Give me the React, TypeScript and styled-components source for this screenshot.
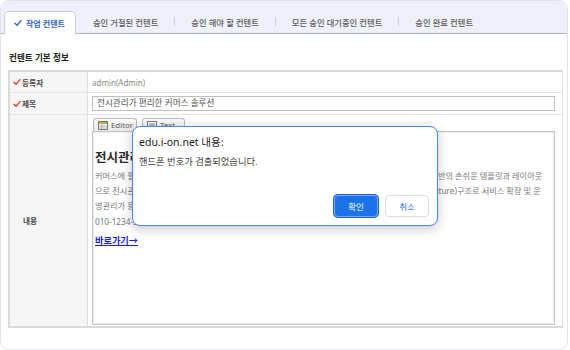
import React from "react";
import styled, { createGlobalStyle } from "styled-components";

const GlobalStyle = createGlobalStyle`
  html, body {
    margin: 0;
    padding: 0;
    background: #fff;
  }
  body {
    font-family: "Noto Sans", "Noto Sans CJK KR", sans-serif;
    color: #333;
  }
`;

const Card = styled.div`
  position: relative;
  box-sizing: border-box;
  width: 568px;
  height: 350px;
  border: 1px solid #e1e3e8;
  border-radius: 9px;
  overflow: hidden;
  background: #fff;
`;

const TabBar = styled.nav`
  display: flex;
  align-items: flex-end;
  height: 32px;
  padding-left: 3px;
  background: #eef1f9;
  border-bottom: 1px solid #aab6d8;
`;

const Tab = styled.div<{ $active?: boolean }>`
  display: flex;
  align-items: center;
  gap: 4px;
  box-sizing: border-box;
  height: ${({ $active }) => ($active ? "23px" : "22px")};
  margin-bottom: ${({ $active }) => ($active ? "-1px" : "0")};
  padding: ${({ $active }) => ($active ? "0 10px 0 9px" : "0 16px")};
  background: ${({ $active }) => ($active ? "#fff" : "transparent")};
  border: ${({ $active }) => ($active ? "1px solid #c6cee4" : "none")};
  border-bottom: none;
  border-radius: 5px 5px 0 0;
  font-size: ${({ $active }) => ($active ? "8px" : "8.3px")};
  font-weight: ${({ $active }) => ($active ? 700 : 500)};
  color: ${({ $active }) => ($active ? "#2d66cc" : "#5c5c5c")};
  white-space: nowrap;
  &:nth-child(2) {
    margin-left: 1px;
  }
`;

const Divider = styled.span`
  align-self: center;
  width: 1px;
  height: 9px;
  margin-top: 8px;
  background: #c9ccd4;
`;

const Body = styled.div`
  padding: 18px 4px 0 7px;
`;

const SectionTitle = styled.h3`
  margin: 0 0 6px 1px;
  font-size: 8.6px;
  line-height: 12px;
  font-weight: 700;
  color: #222;
`;

const InfoTable = styled.div`
  display: grid;
  grid-template-columns: 78px 1fr;
  grid-template-rows: 21px 22px 211px;
  border: 2px solid #dadada;
  border-right-width: 1px;
`;

const LabelCell = styled.div<{ $indent?: number; $last?: boolean }>`
  display: flex;
  align-items: center;
  gap: 1px;
  box-sizing: border-box;
  padding-left: ${({ $indent }) => $indent ?? 3}px;
  background: #f6f6f6;
  border-right: 1px solid #dedede;
  border-bottom: ${({ $last }) => ($last ? "none" : "1px solid #e4e4e4")};
  font-size: 7.7px;
  font-weight: 700;
  color: #4a4a4a;
`;

const ValueCell = styled.div<{ $last?: boolean }>`
  display: flex;
  align-items: center;
  box-sizing: border-box;
  padding: 0 7px 0 4px;
  border-bottom: ${({ $last }) => ($last ? "none" : "1px solid #e4e4e4")};
  font-size: 8px;
  color: #8a8a8a;
`;

const EditorCell = styled(ValueCell)`
  flex-direction: column;
  align-items: stretch;
  padding: 3px 7px 1px 4px;
`;

const TitleInput = styled.div`
  box-sizing: border-box;
  width: 100%;
  height: 15px;
  padding-left: 4px;
  border: 1px solid #bfbfbf;
  font-size: 8.6px;
  line-height: 13px;
  color: #555;
`;

const EditorTabs = styled.div`
  display: flex;
  gap: 5px;
  padding-left: 1px;
`;

const EditorTab = styled.div<{ $width: number }>`
  display: flex;
  align-items: center;
  gap: 3px;
  box-sizing: border-box;
  width: ${({ $width }) => $width}px;
  height: 13px;
  padding-left: 4px;
  border: 1px solid #b9b9b9;
  border-bottom: none;
  border-radius: 3px 3px 0 0;
  background: linear-gradient(#fbfbfb, #e9e9e9);
  font-size: 7.8px;
  color: #555;
`;

const EditorBox = styled.div`
  flex: 1;
  padding: 17px 6px 0 2px;
  border: 1px solid #c4c4c4;
  box-shadow: inset 0 0 0 1px #efefef;
  overflow: hidden;
`;

const Heading = styled.h2`
  margin: 0 0 1px;
  font-size: 12.5px;
  line-height: 18px;
  font-weight: 700;
  color: #2a2a2a;
  white-space: nowrap;
`;

const Para = styled.p`
  margin: 0;
  font-size: 8.2px;
  line-height: 15.2px;
  color: #7a7a7a;
  white-space: nowrap;
`;

const ShortcutLink = styled.a`
  display: inline-block;
  margin-top: 5px;
  font-size: 9.2px;
  line-height: 14px;
  font-weight: 700;
  color: #1c1ce8;
  text-decoration: underline;
`;

const Dialog = styled.div`
  position: absolute;
  left: 131px;
  top: 125px;
  display: flex;
  flex-direction: column;
  box-sizing: border-box;
  width: 306px;
  height: 100px;
  padding: 7px 8px 8px 6px;
  background: #fff;
  border: 1.5px solid #4a86f5;
  border-radius: 8px;
  box-shadow: 0 3px 12px rgba(0, 0, 0, 0.22);
`;

const DialogTitle = styled.div`
  font-size: 10.5px;
  line-height: 16px;
  color: #202124;
`;

const DialogMsg = styled.div`
  margin-top: 5px;
  font-size: 9.3px;
  line-height: 14px;
  color: #3c3c3c;
`;

const DialogActions = styled.div`
  display: flex;
  justify-content: flex-end;
  gap: 7px;
  margin-top: auto;
`;

const DialogButton = styled.button<{ $primary?: boolean }>`
  box-sizing: border-box;
  width: 44px;
  height: 22px;
  padding: 0;
  border-radius: 4px;
  border: 1px solid ${({ $primary }) => ($primary ? "#7eaaf2" : "#dadce0")};
  box-shadow: ${({ $primary }) => ($primary ? "0 0 0 1px #1b5fcf" : "none")};
  background: ${({ $primary }) => ($primary ? "#1a73e8" : "#fff")};
  color: ${({ $primary }) => ($primary ? "#fff" : "#1a73e8")};
  font-family: "Noto Sans", "Noto Sans CJK KR", sans-serif;
  font-size: 8.5px;
`;

const Check = ({ color, size = 8 }: { color: string; size?: number }) => (
  <svg width={size} height={size} viewBox="0 0 10 10">
    <polyline
      points="1.2,5.2 3.8,7.8 8.8,2"
      fill="none"
      stroke={color}
      strokeWidth="1.8"
      strokeLinecap="round"
      strokeLinejoin="round"
    />
  </svg>
);

const EditorIcon = () => (
  <svg width="10" height="9" viewBox="0 0 10 9">
    <rect x="0.5" y="0.5" width="9" height="8" fill="#fff" stroke="#7a7a7a" />
    <rect x="1" y="1" width="4" height="2" fill="#f0a33a" />
    <rect x="5" y="1" width="4" height="2" fill="#7cbf5a" />
    <line x1="1" y1="5" x2="9" y2="5" stroke="#b5b5b5" />
    <line x1="1" y1="7" x2="9" y2="7" stroke="#b5b5b5" />
    <line x1="4" y1="3" x2="4" y2="8" stroke="#b5b5b5" />
  </svg>
);

const TextIcon = () => (
  <svg width="10" height="9" viewBox="0 0 10 9">
    <rect x="0.5" y="0.5" width="9" height="8" fill="#fff" stroke="#7a7a7a" />
    <line x1="2" y1="3" x2="8" y2="3" stroke="#777" />
    <line x1="2" y1="5" x2="8" y2="5" stroke="#777" />
    <line x1="2" y1="7" x2="6" y2="7" stroke="#777" />
  </svg>
);

const tabs = [
  "승인 거절된 컨텐트",
  "승인 해야 할 컨텐트",
  "모든 승인 대기중인 컨텐트",
  "승인 완료 컨텐트",
];

const lines = [
  "커머스에 필요한 모든 기능 갖춘 올인원 솔루션으로 누구나 쉽고 빠른 사용할 수 있는 드래그 앤 드롭 기반의 손쉬운 템플릿과 레이아웃",
  "으로 전시관리가 편리하며 상품 진열과 기획전 운영을 쉽고 빠르게 돕는 MSA(Micro Service Architecture)구조로 서비스 확장 및 운",
  "영관리가 용이합니다. 자세한 상담은 아래 연락처로 문의해 주세요.",
  "010-1234-5678",
];

export default function App() {
  return (
    <>
      <GlobalStyle />
      <Card>
        <TabBar>
          <Tab $active>
            <Check color="#2d66cc" />
            작업 컨텐트
          </Tab>
          {tabs.map((t, i) => (
            <React.Fragment key={t}>
              {i > 0 && <Divider />}
              <Tab>{t}</Tab>
            </React.Fragment>
          ))}
        </TabBar>

        <Body>
          <SectionTitle>컨텐트 기본 정보</SectionTitle>
          <InfoTable>
            <LabelCell>
              <Check color="#e2462c" />
              등록자
            </LabelCell>
            <ValueCell>admin(Admin)</ValueCell>

            <LabelCell>
              <Check color="#e2462c" />
              제목
            </LabelCell>
            <ValueCell>
              <TitleInput>전시관리가 편리한 커머스 솔루션</TitleInput>
            </ValueCell>

            <LabelCell $indent={13} $last>
              내용
            </LabelCell>
            <EditorCell $last>
              <EditorTabs>
                <EditorTab $width={44}>
                  <EditorIcon />
                  Editor
                </EditorTab>
                <EditorTab $width={43}>
                  <TextIcon />
                  Text
                </EditorTab>
              </EditorTabs>
              <EditorBox>
                <Heading>전시관리가 편리한 커머스 솔루션</Heading>
                {lines.map((l) => (
                  <Para key={l}>{l}</Para>
                ))}
                <ShortcutLink href="#">바로가기→</ShortcutLink>
              </EditorBox>
            </EditorCell>
          </InfoTable>
        </Body>

        <Dialog role="alertdialog">
          <DialogTitle>edu.i-on.net 내용:</DialogTitle>
          <DialogMsg>핸드폰 번호가 검출되었습니다.</DialogMsg>
          <DialogActions>
            <DialogButton $primary>확인</DialogButton>
            <DialogButton>취소</DialogButton>
          </DialogActions>
        </Dialog>
      </Card>
    </>
  );
}
